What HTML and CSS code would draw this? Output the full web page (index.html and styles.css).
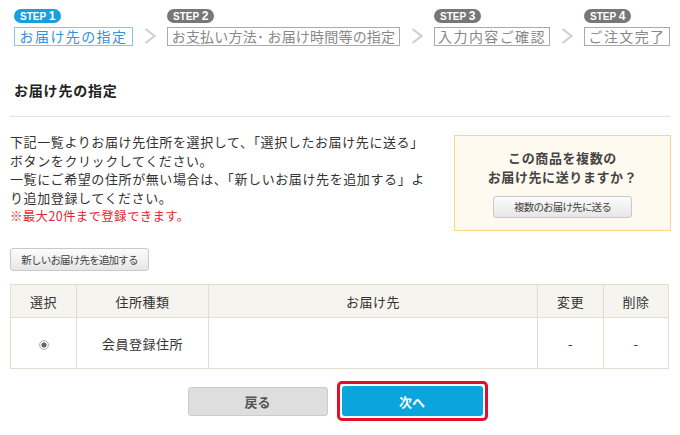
FILE: index.html
```html
<!DOCTYPE html>
<html lang="ja">
<head>
<meta charset="utf-8">
<title>お届け先の指定</title>
<link rel="stylesheet" href="styles.css">
</head>
<body>
<div class="page">
  <div class="steps">
    <div class="step step-current">
      <span class="badge">STEP <b>1</b></span>
      <span class="box box-1">お届け先の指定</span>
    </div>
    <svg class="chev" width="12" height="16" viewBox="0 0 12 16"><polyline points="1.5,1 10.5,8 1.5,15" fill="none" stroke="#cfcfcf" stroke-width="2.2"/></svg>
    <div class="step">
      <span class="badge">STEP <b>2</b></span>
      <span class="box box-2">お支払い方法･ お届け時間等の指定</span>
    </div>
    <svg class="chev" width="12" height="16" viewBox="0 0 12 16"><polyline points="1.5,1 10.5,8 1.5,15" fill="none" stroke="#cfcfcf" stroke-width="2.2"/></svg>
    <div class="step">
      <span class="badge">STEP <b>3</b></span>
      <span class="box box-3">入力内容ご確認</span>
    </div>
    <svg class="chev" width="12" height="16" viewBox="0 0 12 16"><polyline points="1.5,1 10.5,8 1.5,15" fill="none" stroke="#cfcfcf" stroke-width="2.2"/></svg>
    <div class="step">
      <span class="badge">STEP <b>4</b></span>
      <span class="box box-4">ご注文完了</span>
    </div>
  </div>

  <h2 class="section-title">お届け先の指定</h2>

  <div class="intro">
    <p class="intro-text">下記一覧よりお届け先住所を選択して、「選択したお届け先に送る」<br>ボタンをクリックしてください。<br>一覧にご希望の住所が無い場合は、「新しいお届け先を追加する」よ<br>り追加登録してください。<br><span class="note">※最大20件まで登録できます。</span></p>
    <div class="multi-box">
      <p class="multi-q">この商品を複数の<br>お届け先に送りますか？</p>
      <button class="btn-small multi-btn">複数のお届け先に送る</button>
    </div>
  </div>

  <button class="btn-small add-btn">新しいお届け先を追加する</button>

  <table class="addr-table">
    <thead>
      <tr>
        <th class="c-sel">選択</th>
        <th class="c-type">住所種類</th>
        <th class="c-dest">お届け先</th>
        <th class="c-edit">変更</th>
        <th class="c-del">削除</th>
      </tr>
    </thead>
    <tbody>
      <tr>
        <td><span class="radio"></span></td>
        <td>会員登録住所</td>
        <td></td>
        <td>-</td>
        <td>-</td>
      </tr>
    </tbody>
  </table>

  <div class="actions">
    <button class="btn-back">戻る</button>
    <div class="next-wrap"><button class="btn-next">次へ</button></div>
  </div>
</div>
</body>
</html>
```
FILE: styles.css
```css
* { box-sizing: border-box; }
html, body { margin: 0; padding: 0; background: #fff; }
body {
  font-family: "Noto Sans CJK JP", "Noto Sans", sans-serif;
  color: #333;
  font-size: 13px;
}
.page { width: 680px; padding: 0 10px; }

/* steps */
.steps {
  display: flex;
  align-items: flex-end;
  gap: 11px;
  padding: 9px 0 0 4px;
}
.step { display: flex; flex-direction: column; align-items: flex-start; gap: 4px; }
.badge {
  display: inline-block;
  height: 14px;
  line-height: 14px;
  padding: 0 6px;
  border-radius: 7px;
  background: #777;
  color: #fff;
  font-family: "Liberation Sans", Arial, sans-serif;
  font-weight: bold;
  font-size: 10px;
  letter-spacing: 0;
}
.badge b { font-size: 12px; }
.step-current .badge { background: #17a0db; }
.box {
  display: block;
  height: 19px;
  line-height: 17px;
  border: 1px solid #aaa;
  color: #888;
  font-size: 14px;
  letter-spacing: 1px;
  text-align: center;
  white-space: nowrap;
}
.step-current .box { border-color: #86c4ef; color: #3b90d6; }
.box-1 { width: 119px; letter-spacing: 1.4px; }
.box-2 { width: 233px; letter-spacing: 0.2px; }
.box-3 { width: 116px; letter-spacing: 1.4px; }
.box-4 { width: 86px; letter-spacing: 1.4px; }
.chev { margin-bottom: 2px; }

/* title */
.section-title {
  margin: 34px 0 0;
  padding: 0 4px 16px;
  border-bottom: 1px solid #e3e3e3;
  font-size: 14px;
  line-height: 20px;
  font-weight: bold;
  letter-spacing: 0.8px;
  color: #222;
}

/* intro */
.intro {
  display: flex;
  justify-content: space-between;
  align-items: flex-start;
  margin-top: 16px;
}
.intro-text {
  margin: 0;
  line-height: 18.5px;
  font-size: 13px;
  letter-spacing: 0.6px;
  white-space: nowrap;
}
.note { color: #e8262e; font-size: 12.5px; letter-spacing: 0.3px; }
.multi-box {
  width: 217px;
  height: 96px;
  margin-top: 2px;
  margin-right: -1px;
  border: 1px solid #fcd688;
  background: #fffaf0;
  padding-top: 12px;
  text-align: center;
}
.multi-q {
  margin: 0 0 10px;
  font-weight: bold;
  font-size: 13px;
  line-height: 19px;
  color: #444;
  letter-spacing: 0.6px;
}
.btn-small {
  display: inline-block;
  height: 23px;
  padding: 0;
  border: 1px solid #c9c9c9;
  border-radius: 3px;
  background: linear-gradient(#fcfcfc, #e6e6e6);
  font-family: "Noto Sans CJK JP", sans-serif;
  font-size: 10.5px;
  letter-spacing: -0.8px;
  color: #444;
  line-height: 21px;
}
.multi-btn { width: 139px; height: 22px; line-height: 20px; }
.add-btn { width: 139px; margin-top: 17px; display: block; }

/* table */
.addr-table {
  width: 659px;
  margin-top: 13px;
  border-collapse: collapse;
  table-layout: fixed;
}
.addr-table th, .addr-table td {
  border: 1px solid #e2ddd1;
  text-align: center;
  font-weight: normal;
  font-size: 13px;
  color: #333;
  letter-spacing: 0.5px;
  padding: 0;
}
.addr-table th { background: #f6f4ef; height: 33px; }
.addr-table td { height: 51px; }
.c-sel { width: 66px; }
.c-type { width: 132px; }
.c-edit { width: 66px; }
.c-del { width: 65px; }
.radio {
  display: inline-block;
  width: 10px;
  height: 10px;
  border: 1px solid #b5b5b5;
  border-radius: 50%;
  background: radial-gradient(circle, #666 0 2.3px, #f0f0f0 2.8px);
  vertical-align: middle;
}

/* actions */
.actions {
  display: flex;
  justify-content: center;
  align-items: center;
  gap: 9px;
  margin-top: 12px;
  padding-right: 5px;
}
.btn-back {
  width: 140px;
  height: 29px;
  border: 1px solid #ccc;
  border-radius: 3px;
  background: #dedede;
  color: #555;
  font-family: "Noto Sans CJK JP", sans-serif;
  font-weight: bold;
  font-size: 13px;
  padding: 0;
}
.next-wrap {
  border: 3px solid #e0102c;
  border-radius: 5px;
  padding: 2px 2px;
  display: flex;
}
.btn-next {
  width: 141px;
  height: 30px;
  border: 0;
  border-radius: 3px;
  background: #0aa5dd;
  color: #fff;
  font-family: "Noto Sans CJK JP", sans-serif;
  font-weight: bold;
  font-size: 13px;
  padding: 0;
}
```
